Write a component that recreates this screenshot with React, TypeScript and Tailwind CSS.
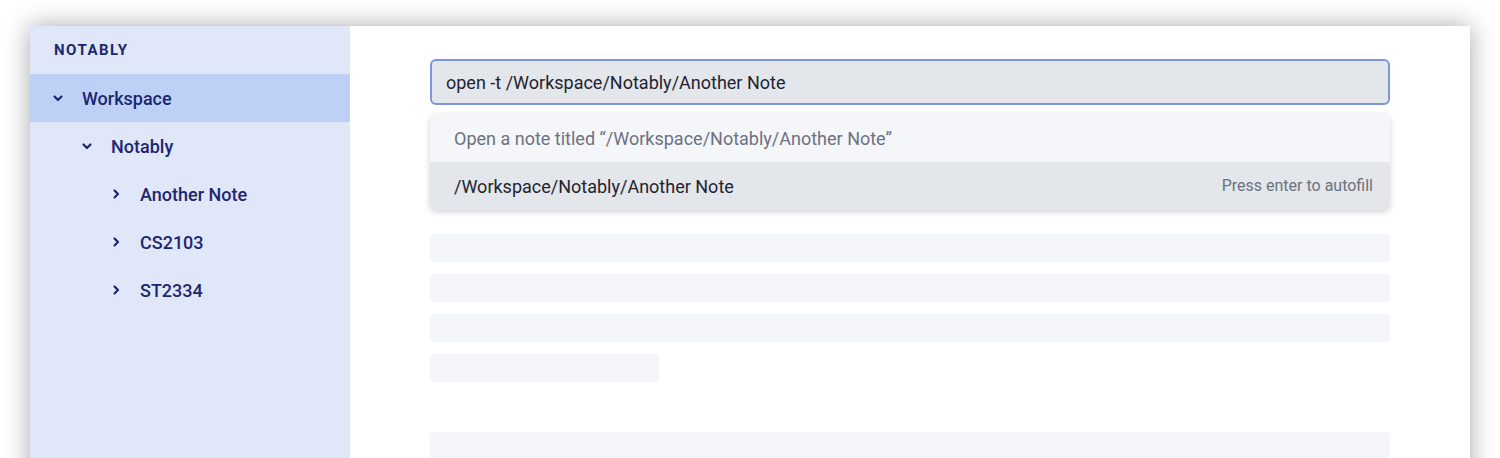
import React from "react";

const FONT = { fontFamily: "Roboto, 'Noto Sans', sans-serif" };

function Chevron({ open }: { open: boolean }) {
  return (
    <svg width="12" height="12" viewBox="0 0 12 12" className="shrink-0" aria-hidden>
      {open ? (
        <polyline points="2.5,4.5 6,8 9.5,4.5" fill="none" stroke="#1e2672" strokeWidth="2.2" strokeLinecap="round" strokeLinejoin="round" />
      ) : (
        <polyline points="4.5,2.5 8,6 4.5,9.5" fill="none" stroke="#1e2672" strokeWidth="2.2" strokeLinecap="round" strokeLinejoin="round" />
      )}
    </svg>
  );
}

const TREE = [
  { label: "Workspace", depth: 0, open: true, active: true },
  { label: "Notably", depth: 1, open: true },
  { label: "Another Note", depth: 2, open: false },
  { label: "CS2103", depth: 2, open: false },
  { label: "ST2334", depth: 2, open: false },
];

const INDENT = ["pl-[22px]", "pl-[51px]", "pl-[80px]"];

export default function App() {
  return (
    <div className="h-[458px] overflow-hidden bg-white pt-[26px] px-[30px]" style={FONT}>
      <div className="flex h-[500px] bg-white shadow-[0_0_24px_rgba(0,0,0,0.35)]">
        <aside className="w-[320px] shrink-0 bg-[#e0e7f8]">
          <div className="flex h-[48px] items-center pl-[24px] text-[15px] font-bold tracking-[0.1em] text-[#1e2672]">
            NOTABLY
          </div>
          {TREE.map((n) => (
            <div
              key={n.label}
              className={`flex h-[48px] items-center gap-[18px] ${INDENT[n.depth]} ${n.active ? "bg-[#bdd0f6]" : ""}`}
            >
              <Chevron open={n.open} />
              <span className="text-[18px] font-medium text-[#1e2672]">{n.label}</span>
            </div>
          ))}
        </aside>

        <main className="flex-1 px-[80px] pt-[33px]">
          <div className="flex h-[46px] items-center rounded-[6px] border-2 border-[#7d95dd] bg-[#e3e6eb] px-[14px] text-[18px] text-[#1f2430]">
            open -t /Workspace/Notably/Another Note
          </div>

          <div className="mt-[9px] overflow-hidden rounded-[6px] shadow-[0_2px_6px_rgba(0,0,0,0.18)]">
            <div className="flex h-[48px] items-center bg-[#f5f6fa] px-[24px] text-[18px] text-[#6b7280]">
              Open a note titled “/Workspace/Notably/Another Note”
            </div>
            <div className="flex h-[48px] items-center justify-between bg-[#e3e6eb] pl-[24px] pr-[17px]">
              <span className="text-[18px] text-[#1f2430]">/Workspace/Notably/Another Note</span>
              <span className="text-[16px] text-[#6b7280]">Press enter to autofill</span>
            </div>
          </div>

          <div className="mt-[24px] flex flex-col gap-[12px]">
            <div className="h-[28px] rounded-[4px] bg-[#f5f6fa]" />
            <div className="h-[28px] rounded-[4px] bg-[#f5f6fa]" />
            <div className="h-[28px] rounded-[4px] bg-[#f5f6fa]" />
            <div className="h-[28px] w-[229px] rounded-[4px] bg-[#f5f6fa]" />
          </div>
          <div className="mt-[50px] h-[28px] rounded-[4px] bg-[#f5f6fa]" />
        </main>
      </div>
    </div>
  );
}
